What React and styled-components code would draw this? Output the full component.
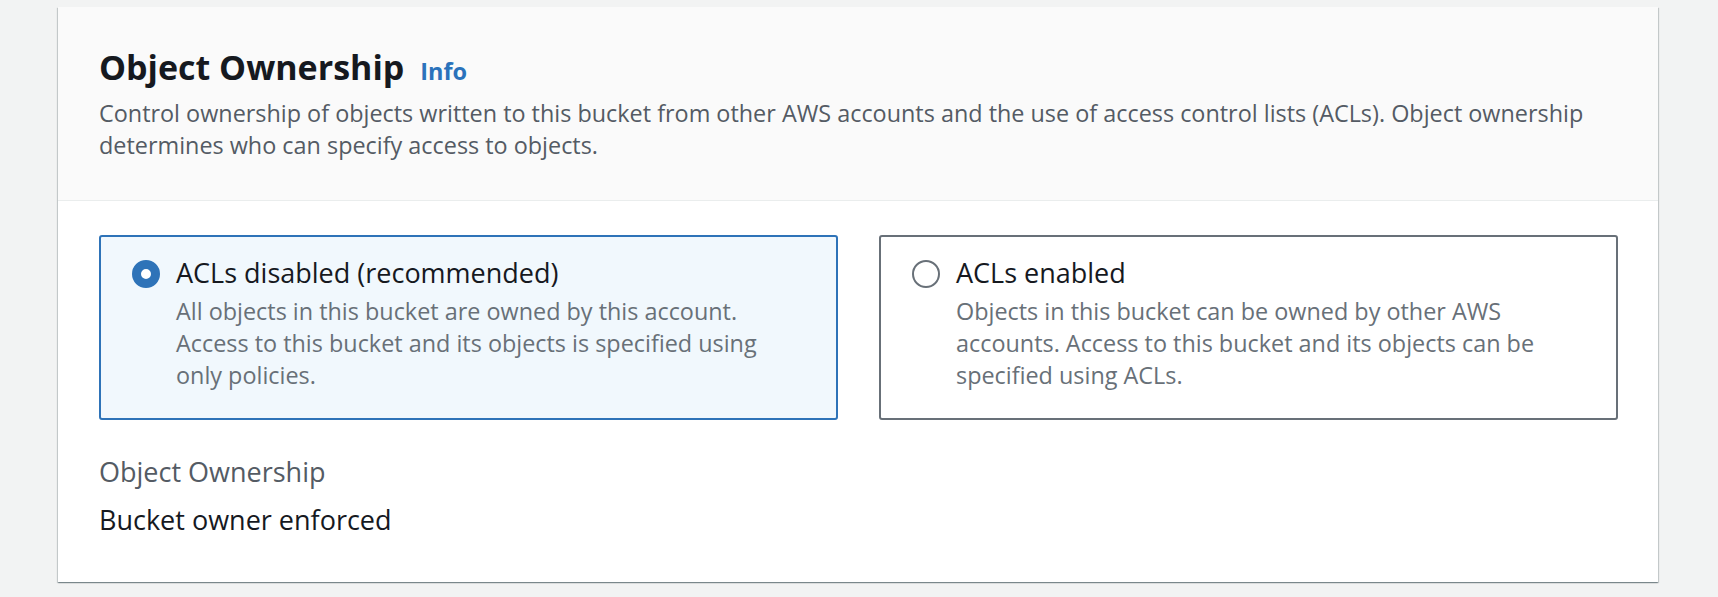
import React from "react";
import styled, { createGlobalStyle } from "styled-components";

const GlobalStyle = createGlobalStyle`
  html, body {
    margin: 0;
    padding: 0;
    background: #f2f3f3;
  }
  body {
    font-family: "Open Sans", "Noto Sans", "Liberation Sans", sans-serif;
    color: #16191f;
  }
`;

const Page = styled.div`
  padding: 7px 0 14px 58px;
`;

const Card = styled.section`
  width: 1600px;
  background: #ffffff;
  box-shadow: 0 1px 1px 0 rgba(0, 28, 36, 0.3),
    1px 1px 1px 0 rgba(0, 28, 36, 0.15),
    -1px 1px 1px 0 rgba(0, 28, 36, 0.15);
`;

const Header = styled.header`
  background: #fafafa;
  border-bottom: 1px solid #eaeded;
  padding: 40px 36px 39px 41px;
`;

const TitleRow = styled.div`
  display: flex;
  align-items: baseline;
  gap: 16px;
`;

const Title = styled.h2`
  margin: 0;
  font-size: 34px;
  line-height: 40px;
  font-weight: 700;
  color: #16191f;
`;

const InfoLink = styled.a`
  font-size: 23.5px;
  font-weight: 700;
  color: #2a72bb;
  text-decoration: none;
  cursor: pointer;
`;

const Description = styled.p`
  margin: 10px 0 0;
  font-size: 23.4px;
  line-height: 32px;
  color: #545b64;
`;

const Body = styled.div`
  padding: 34px 40px 44px 41px;
`;

const Tiles = styled.div`
  display: grid;
  grid-template-columns: 1fr 1fr;
  gap: 41px;
`;

const Tile = styled.label`
  display: flex;
  align-items: flex-start;
  gap: 16px;
  padding: 18px 40px 27px 31px;
  border: 2px solid ${(p) => (p.$selected ? "#2e73b8" : "#687078")};
  border-radius: 3px;
  background: ${(p) => (p.$selected ? "#f1f8fd" : "#ffffff")};
  cursor: pointer;
`;

const Radio = styled.span`
  flex: none;
  box-sizing: border-box;
  width: 28px;
  height: 28px;
  margin-top: 5px;
  border-radius: 50%;
  background: #ffffff;
  border: ${(p) => (p.$checked ? "9px solid #2e73b8" : "2px solid #687078")};
`;

const TileText = styled.div`
  display: flex;
  flex-direction: column;
  gap: 4px;
`;

const TileLabel = styled.span`
  font-size: 27px;
  line-height: 36px;
  color: #16191f;
`;

const TileDescription = styled.span`
  font-size: 23.4px;
  line-height: 32px;
  color: #687078;
`;

const Field = styled.div`
  margin-top: 34px;
  display: flex;
  flex-direction: column;
  gap: 12px;
`;

const FieldLabel = styled.div`
  font-size: 27px;
  line-height: 36px;
  color: #545b64;
`;

const FieldValue = styled.div`
  font-size: 27px;
  line-height: 36px;
  color: #16191f;
`;

const options = [
  {
    id: "disabled",
    label: "ACLs disabled (recommended)",
    description:
      "All objects in this bucket are owned by this account. Access to this bucket and its objects is specified using only policies.",
    selected: true,
  },
  {
    id: "enabled",
    label: "ACLs enabled",
    description:
      "Objects in this bucket can be owned by other AWS accounts. Access to this bucket and its objects can be specified using ACLs.",
    selected: false,
  },
];

export default function App() {
  return (
    <>
      <GlobalStyle />
      <Page>
        <Card>
          <Header>
            <TitleRow>
              <Title>Object Ownership</Title>
              <InfoLink>Info</InfoLink>
            </TitleRow>
            <Description>
              Control ownership of objects written to this bucket from other AWS
              accounts and the use of access control lists (ACLs). Object
              ownership determines who can specify access to objects.
            </Description>
          </Header>
          <Body>
            <Tiles>
              {options.map((o) => (
                <Tile key={o.id} $selected={o.selected}>
                  <Radio $checked={o.selected} />
                  <TileText>
                    <TileLabel>{o.label}</TileLabel>
                    <TileDescription>{o.description}</TileDescription>
                  </TileText>
                </Tile>
              ))}
            </Tiles>
            <Field>
              <FieldLabel>Object Ownership</FieldLabel>
              <FieldValue>Bucket owner enforced</FieldValue>
            </Field>
          </Body>
        </Card>
      </Page>
    </>
  );
}
